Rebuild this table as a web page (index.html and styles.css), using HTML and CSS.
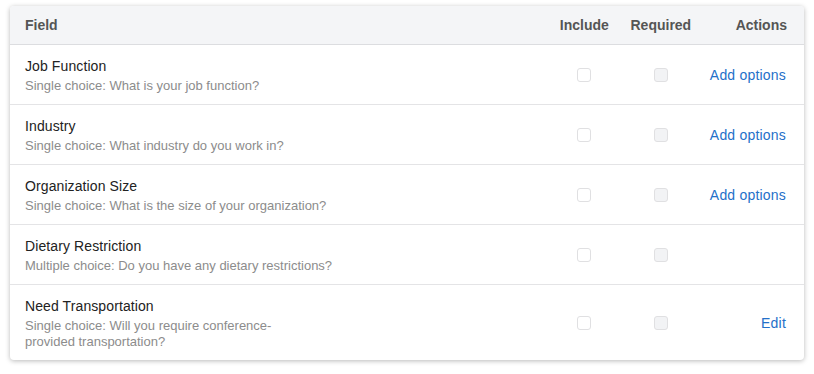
FILE: index.html
```html
<!DOCTYPE html>
<html>
<head>
    <title>Registration Fields</title>
    <link rel="stylesheet" href="styles.css">
</head>
<body>
    <div class="card">
        <table class="fields">
            <thead>
                <tr>
                    <th class="col-field">Field</th>
                    <th class="col-check col-include">Include</th>
                    <th class="col-check col-required">Required</th>
                    <th class="col-actions">Actions</th>
                </tr>
            </thead>
            <tbody>
                <tr>
                    <td class="col-field">
                        <div class="field-name">Job Function</div>
                        <div class="field-desc">Single choice: What is your job function?</div>
                    </td>
                    <td class="col-check"><input type="checkbox" class="include" disabled></td>
                    <td class="col-check"><input type="checkbox" class="required" disabled></td>
                    <td class="col-actions"><a href="#">Add options</a></td>
                </tr>
                <tr>
                    <td class="col-field">
                        <div class="field-name">Industry</div>
                        <div class="field-desc">Single choice: What industry do you work in?</div>
                    </td>
                    <td class="col-check"><input type="checkbox" class="include" disabled></td>
                    <td class="col-check"><input type="checkbox" class="required" disabled></td>
                    <td class="col-actions"><a href="#">Add options</a></td>
                </tr>
                <tr>
                    <td class="col-field">
                        <div class="field-name">Organization Size</div>
                        <div class="field-desc">Single choice: What is the size of your organization?</div>
                    </td>
                    <td class="col-check"><input type="checkbox" class="include" disabled></td>
                    <td class="col-check"><input type="checkbox" class="required" disabled></td>
                    <td class="col-actions"><a href="#">Add options</a></td>
                </tr>
                <tr>
                    <td class="col-field">
                        <div class="field-name">Dietary Restriction</div>
                        <div class="field-desc">Multiple choice: Do you have any dietary restrictions?</div>
                    </td>
                    <td class="col-check"><input type="checkbox" class="include" disabled></td>
                    <td class="col-check"><input type="checkbox" class="required" disabled></td>
                    <td class="col-actions"></td>
                </tr>
                <tr>
                    <td class="col-field">
                        <div class="field-name">Need Transportation</div>
                        <div class="field-desc">Single choice: Will you require conference-<br>provided transportation?</div>
                    </td>
                    <td class="col-check"><input type="checkbox" class="include" disabled></td>
                    <td class="col-check"><input type="checkbox" class="required" disabled></td>
                    <td class="col-actions"><a href="#">Edit</a></td>
                </tr>
            </tbody>
        </table>
    </div>
</body>
</html>
```

FILE: styles.css
```css
body {
    font-family: "Liberation Sans", Arial, sans-serif;
    margin: 0;
    padding: 6px 10px;
    background-color: #ffffff;
}
.card {
    width: 794px;
    background: white;
    border-radius: 4px;
    box-shadow: 0 1px 5px rgba(0,0,0,0.28);
    overflow: hidden;
}
.fields {
    width: 100%;
    border-collapse: collapse;
}
.fields th {
    height: 38px;
    padding: 0 15px;
    background: #f4f5f7;
    border-bottom: 1px solid #dcdde0;
    font-size: 14px;
    font-weight: bold;
    color: #555;
    text-align: left;
}
.fields td {
    height: 37px;
    padding: 12px 15px 10px 15px;
    border-bottom: 1px solid #e4e4e6;
    vertical-align: middle;
}
.fields tbody tr:last-child td {
    border-bottom: none;
}
.fields .col-check {
    padding: 0;
    text-align: center;
}
.col-include {
    width: 75px;
}
.col-required {
    width: 78px;
}
.fields .col-actions {
    width: 76px;
    padding-left: 10px;
    padding-right: 17px;
    text-align: right;
    white-space: nowrap;
}
.fields td.col-actions {
    padding-top: 10px;
    padding-right: 18px;
}
.field-name {
    font-size: 14px;
    line-height: 18px;
    color: #222;
    letter-spacing: 0.1px;
}
.field-desc {
    margin-top: 3px;
    font-size: 13px;
    line-height: 16px;
    color: #8c8c8c;
}
input[type="checkbox"] {
    appearance: none;
    -webkit-appearance: none;
    display: inline-block;
    width: 14px;
    height: 14px;
    margin: 0;
    vertical-align: middle;
    border: 1px solid #e0e0e2;
    border-radius: 3px;
    background: #fff;
}
input.required {
    background: #f2f3f5;
}
.col-actions a {
    font-size: 14px;
    letter-spacing: 0.2px;
    color: #2470c9;
    text-decoration: none;
}
```
